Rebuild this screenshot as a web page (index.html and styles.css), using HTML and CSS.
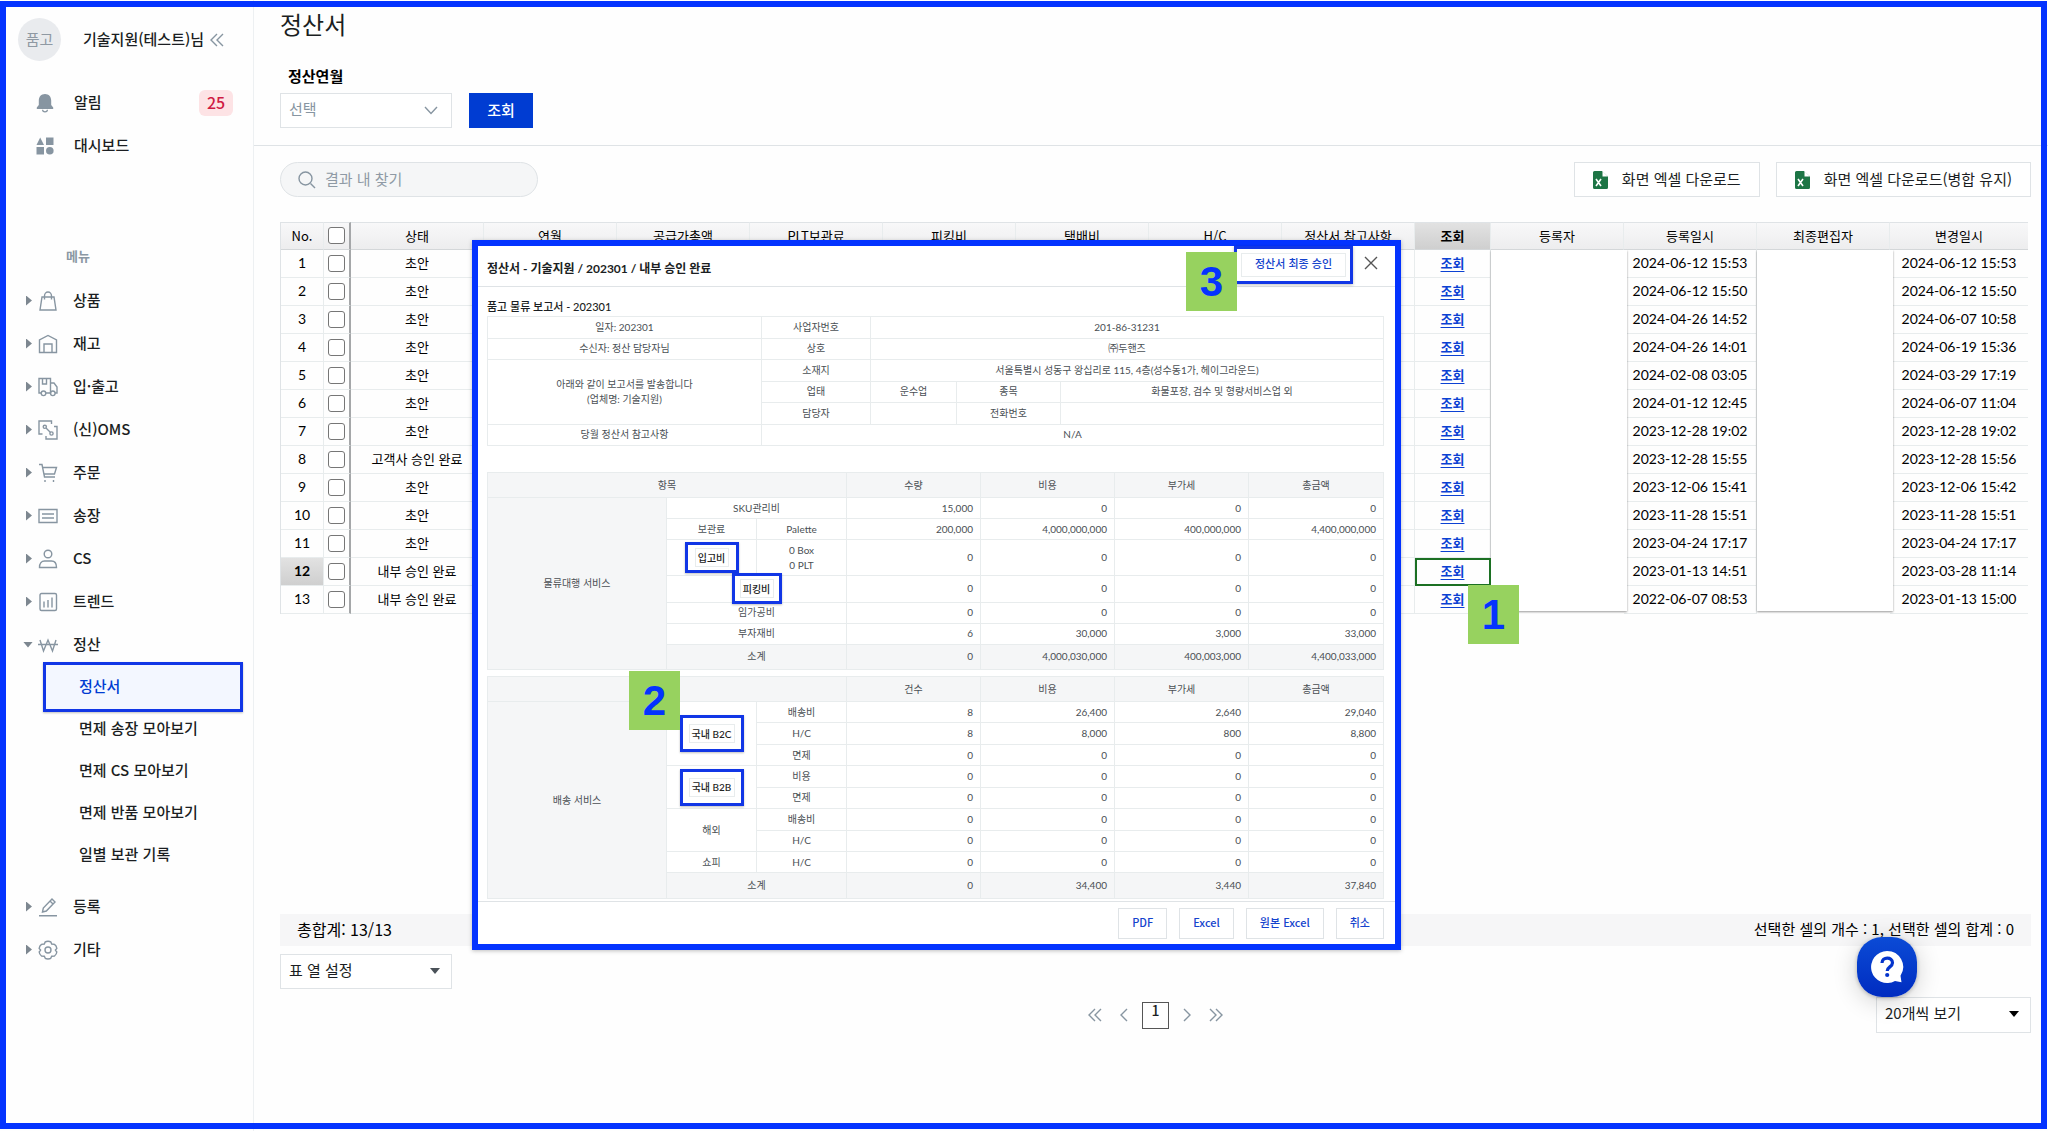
FILE: index.html
```html
<!DOCTYPE html>
<html lang="ko">
<head>
<meta charset="utf-8">
<title>정산서</title>
<meta name="viewport" content="width=device-width, initial-scale=1">
<link rel="stylesheet" href="styles.css">
</head>
<body>
<div class="app">
  <aside class="sidebar">
    <div class="profile">
      <span class="avatar">품고</span>
      <span class="profile-name">기술지원(테스트)님</span>
      <button class="icon-button" type="button" aria-label="메뉴 접기"><svg width="14" height="14" viewBox="0 0 14 14" class="line"><path d="M7 1L1 7l6 6M13 1L7 7l6 6"/></svg></button>
    </div>
    <nav class="nav" aria-label="바로가기">
      <a class="shortcut" href="#"><svg width="18" height="20" viewBox="0 0 18 20" class="fill"><path d="M9 1c-3.800 0-6.200 2.800-6.200 6.500V12L.8 14.600V16h16.400v-1.400L15.200 12V7.500C15.200 3.800 12.800 1 9 1zM6 16.800a3 2.600 0 0 0 6 0l-1.200 0a1.800 1.400 0 0 1-3.600 0z"/></svg>알림<span class="badge">25</span></a>
      <a class="shortcut" href="#"><svg width="18" height="20" viewBox="0 0 18 20" class="fill"><path d="M4.200 1.500L8 9H.5zM10 1.500h7.500V9H10zM.5 11H8v7.500H.5z"/><circle cx="13.800" cy="14.800" r="3.800"/></svg>대시보드</a>
    </nav>
    <p class="nav-title">메뉴</p>
    <nav class="nav" aria-label="메뉴">
      <a class="menu" href="#"><i class="arrow"></i><svg width="20" height="20" viewBox="0 0 20 20" class="line"><path d="M4 6h12l2 13H2zM6.500 8.500V5a3.500 4 0 0 1 7 0v3.500" /></svg>상품</a>
      <a class="menu" href="#"><i class="arrow"></i><svg width="20" height="20" viewBox="0 0 20 20" class="line"><path d="M1.500 18.500V6L10 1.500 18.500 6v12.500zM6 18.500V10h8v8.500"/></svg>재고</a>
      <a class="menu" href="#"><i class="arrow"></i><svg width="20" height="20" viewBox="0 0 20 20" class="line"><path d="M3 16H1V1.500h11.500V16H8M12.500 6h3.500l3 4v6h-2M4.500 1.500V7h4V1.500"/><circle cx="5.500" cy="16.300" r="2.300"/><circle cx="14.800" cy="16.300" r="2.300"/></svg>입·출고</a>
      <a class="menu" href="#"><i class="arrow"></i><svg width="20" height="20" viewBox="0 0 20 20" class="line"><path d="M4.500 14H1V1h12.500v3M8 16v3h11V6.500h-3M8 8l4.500 4.500"/><circle cx="6.800" cy="6.800" r="1.600"/><circle cx="13.500" cy="13.500" r="1.600"/></svg>(신)OMS</a>
      <a class="menu" href="#"><i class="arrow"></i><svg width="20" height="20" viewBox="0 0 20 20" class="line"><path d="M1 1.500h3L6.500 14H17M4.800 4.500H18.500L16.500 11H6.200M7 17v2M15.500 17v2"/></svg>주문</a>
      <a class="menu" href="#"><i class="arrow"></i><svg width="20" height="20" viewBox="0 0 20 20" class="line"><path d="M1 3.500h18v13H1zM4 8h12M4 12h12"/></svg>송장</a>
      <a class="menu" href="#"><i class="arrow"></i><svg width="20" height="20" viewBox="0 0 20 20" class="line"><circle cx="10" cy="5" r="3.800"/><path d="M1.500 18.500c0-4 2-6.500 5-6.500h7c3 0 5 2.500 5 6.500z"/></svg>CS</a>
      <a class="menu" href="#"><i class="arrow"></i><svg width="20" height="20" viewBox="0 0 20 20" class="line"><rect x="2" y="1.500" width="16.500" height="17" rx="1.500"/><path d="M6 9.500v6M10 8v7.500M14 5.500v10"/></svg>트렌드</a>
      <a class="menu" href="#" aria-expanded="true"><i class="arrow open"></i><svg width="20" height="20" viewBox="0 0 20 20" class="line"><path d="M2 5l3.500 11L10 5l4.500 11L18 5M0 9.500h20"/></svg>정산</a>
      <div class="submenu">
        <a class="sub current" href="#" aria-current="page">정산서</a>
        <a class="sub" href="#">면제 송장 모아보기</a>
        <a class="sub" href="#">면제 CS 모아보기</a>
        <a class="sub" href="#">면제 반품 모아보기</a>
        <a class="sub" href="#">일별 보관 기록</a>
      </div>
      <a class="menu" href="#"><i class="arrow"></i><svg width="20" height="20" viewBox="0 0 20 20" class="line"><path d="M1 18.800h18M4.500 15l.8-4L14 2l3 3-8.700 9zM12 4l3 3"/></svg>등록</a>
      <a class="menu" href="#"><i class="arrow"></i><svg width="20" height="20" viewBox="0 0 20 20" class="line"><path d="M7.300 1.800C8.500 1 11.500 1 12.700 1.800l1 2.200 2.800.4c1.300.9 2.200 2.600 2.300 4L17.400 10l1.400 2c-.1 1.500-1 3-2.300 4l-2.800.2-1 2.200c-1.200.8-4.200.8-5.400 0l-1-2.200L3.500 16c-1.300-1-2.200-2.500-2.300-4l1.400-2-1.400-1.600c.1-1.400 1-3.100 2.300-4L6.300 4z"/><circle cx="10" cy="10" r="3"/></svg>기타</a>
    </nav>
  </aside>

  <main class="main">
    <header class="page-head">
      <h1>정산서</h1>
      <label class="filter-label" for="month">정산연월</label>
      <div class="filters">
        <span class="select-box"><select id="month" class="placeholder"><option>선택</option></select><svg width="14" height="9" viewBox="0 0 14 9" class="line"><path d="M1 1l6 6.500L13 1"/></svg></span>
        <button class="primary" type="button">조회</button>
      </div>
    </header>

    <section class="content">
      <div class="toolbar">
        <label class="search"><svg width="18" height="18" viewBox="0 0 18 18" class="line"><circle cx="7.500" cy="7.500" r="6.500"/><path d="M12.500 12.500L17 17"/></svg><input type="search" placeholder="결과 내 찾기" aria-label="결과 내 찾기"></label>
        <div class="exports">
          <button class="export" type="button"><svg width="15" height="18" viewBox="0 0 15 18"><path d="M1.500 0H9l6 5.500V16.500A1.500 1.500 0 0 1 13.500 18h-12A1.500 1.500 0 0 1 0 16.500v-15A1.500 1.500 0 0 1 1.500 0z" fill="#1d7545"/><path d="M9.500 0v5.500H15z" fill="#fff"/><path d="M3 8l5 7M8 8l-5 7" stroke="#fff" stroke-width="1.600" fill="none"/></svg>화면 엑셀 다운로드</button>
          <button class="export" type="button"><svg width="15" height="18" viewBox="0 0 15 18"><path d="M1.500 0H9l6 5.500V16.500A1.500 1.500 0 0 1 13.500 18h-12A1.500 1.500 0 0 1 0 16.500v-15A1.500 1.500 0 0 1 1.500 0z" fill="#1d7545"/><path d="M9.500 0v5.500H15z" fill="#fff"/><path d="M3 8l5 7M8 8l-5 7" stroke="#fff" stroke-width="1.600" fill="none"/></svg>화면 엑셀 다운로드(병합 유지)</button>
        </div>
      </div>

      <div class="grid-area">
        <table class="grid">
          <colgroup><col class="c-no"><col class="c-check"><col class="c-mid"><col class="c-mid"><col class="c-mid"><col class="c-mid"><col class="c-mid"><col class="c-mid"><col class="c-mid"><col class="c-mid"><col class="c-link"><col class="c-mid"><col class="c-mid"><col class="c-mid"><col></colgroup>
          <thead>
            <tr><th>No.</th><th class="pin"><input type="checkbox" aria-label="전체 선택"></th><th>상태</th><th>연월</th><th>공급가총액</th><th>PLT보관료</th><th>피킹비</th><th>택배비</th><th>H/C</th><th>정산서 참고사항</th><th class="active">조회</th><th>등록자</th><th>등록일시</th><th>최종편집자</th><th>변경일시</th></tr>
          </thead>
          <tbody>
            <tr><td class="num">1</td><td class="pin"><input type="checkbox" aria-label="1행"></td><td>초안</td><td></td><td></td><td></td><td></td><td></td><td></td><td></td><td><a href="#">조회</a></td><td class="masked" rowspan="13"><div class="mask"></div></td><td class="num">2024-06-12 15:53</td><td class="masked" rowspan="13"><div class="mask"></div></td><td class="num">2024-06-12 15:53</td></tr>
            <tr><td class="num">2</td><td class="pin"><input type="checkbox" aria-label="2행"></td><td>초안</td><td></td><td></td><td></td><td></td><td></td><td></td><td></td><td><a href="#">조회</a></td><td class="num">2024-06-12 15:50</td><td class="num">2024-06-12 15:50</td></tr>
            <tr><td class="num">3</td><td class="pin"><input type="checkbox" aria-label="3행"></td><td>초안</td><td></td><td></td><td></td><td></td><td></td><td></td><td></td><td><a href="#">조회</a></td><td class="num">2024-04-26 14:52</td><td class="num">2024-06-07 10:58</td></tr>
            <tr><td class="num">4</td><td class="pin"><input type="checkbox" aria-label="4행"></td><td>초안</td><td></td><td></td><td></td><td></td><td></td><td></td><td></td><td><a href="#">조회</a></td><td class="num">2024-04-26 14:01</td><td class="num">2024-06-19 15:36</td></tr>
            <tr><td class="num">5</td><td class="pin"><input type="checkbox" aria-label="5행"></td><td>초안</td><td></td><td></td><td></td><td></td><td></td><td></td><td></td><td><a href="#">조회</a></td><td class="num">2024-02-08 03:05</td><td class="num">2024-03-29 17:19</td></tr>
            <tr><td class="num">6</td><td class="pin"><input type="checkbox" aria-label="6행"></td><td>초안</td><td></td><td></td><td></td><td></td><td></td><td></td><td></td><td><a href="#">조회</a></td><td class="num">2024-01-12 12:45</td><td class="num">2024-06-07 11:04</td></tr>
            <tr><td class="num">7</td><td class="pin"><input type="checkbox" aria-label="7행"></td><td>초안</td><td></td><td></td><td></td><td></td><td></td><td></td><td></td><td><a href="#">조회</a></td><td class="num">2023-12-28 19:02</td><td class="num">2023-12-28 19:02</td></tr>
            <tr><td class="num">8</td><td class="pin"><input type="checkbox" aria-label="8행"></td><td>고객사 승인 완료</td><td></td><td></td><td></td><td></td><td></td><td></td><td></td><td><a href="#">조회</a></td><td class="num">2023-12-28 15:55</td><td class="num">2023-12-28 15:56</td></tr>
            <tr><td class="num">9</td><td class="pin"><input type="checkbox" aria-label="9행"></td><td>초안</td><td></td><td></td><td></td><td></td><td></td><td></td><td></td><td><a href="#">조회</a></td><td class="num">2023-12-06 15:41</td><td class="num">2023-12-06 15:42</td></tr>
            <tr><td class="num">10</td><td class="pin"><input type="checkbox" aria-label="10행"></td><td>초안</td><td></td><td></td><td></td><td></td><td></td><td></td><td></td><td><a href="#">조회</a></td><td class="num">2023-11-28 15:51</td><td class="num">2023-11-28 15:51</td></tr>
            <tr><td class="num">11</td><td class="pin"><input type="checkbox" aria-label="11행"></td><td>초안</td><td></td><td></td><td></td><td></td><td></td><td></td><td></td><td><a href="#">조회</a></td><td class="num">2023-04-24 17:17</td><td class="num">2023-04-24 17:17</td></tr>
            <tr><td class="num active">12</td><td class="pin"><input type="checkbox" aria-label="12행"></td><td>내부 승인 완료</td><td></td><td></td><td></td><td></td><td></td><td></td><td></td><td class="selected"><a href="#">조회</a><span class="step step-1">1</span></td><td class="num">2023-01-13 14:51</td><td class="num">2023-03-28 11:14</td></tr>
            <tr><td class="num">13</td><td class="pin"><input type="checkbox" aria-label="13행"></td><td>내부 승인 완료</td><td></td><td></td><td></td><td></td><td></td><td></td><td></td><td><a href="#">조회</a></td><td class="num">2022-06-07 08:53</td><td class="num">2023-01-13 15:00</td></tr>
          </tbody>
        </table>
      </div>

      <div class="summary"><span class="total">총합계: 13/13</span><span>선택한 셀의 개수 : 1, 선택한 셀의 합계 : 0</span></div>
      <span class="select-box"><select aria-label="표 열 설정"><option>표 열 설정</option></select><i class="caret soft"></i></span>
      <div class="pager-row">
        <div class="pager">
          <button class="icon-button" type="button" aria-label="처음"><svg width="14" height="14" viewBox="0 0 14 14" class="line"><path d="M7 1L1 7l6 6M13 1L7 7l6 6"/></svg></button>
          <button class="icon-button" type="button" aria-label="이전"><svg width="14" height="14" viewBox="0 0 14 14" class="line"><path d="M10 1L4 7l6 6"/></svg></button>
          <button class="page-number" type="button">1</button>
          <button class="icon-button" type="button" aria-label="다음"><svg width="14" height="14" viewBox="0 0 14 14" class="line"><path d="M4 1l6 6-6 6"/></svg></button>
          <button class="icon-button" type="button" aria-label="마지막"><svg width="14" height="14" viewBox="0 0 14 14" class="line"><path d="M1 1l6 6-6 6M7 1l6 6-6 6"/></svg></button>
        </div>
        <span class="select-box page-size"><select aria-label="페이지 크기"><option>20개씩 보기</option></select><i class="caret"></i></span>
      </div>
    </section>

    <section class="modal" role="dialog" aria-label="정산서">
      <header class="modal-head">
        <h2>정산서 - 기술지원 / 202301 / 내부 승인 완료</h2>
        <button class="approve" type="button">정산서 최종 승인</button>
        <button class="icon-button" type="button" aria-label="닫기"><svg width="14" height="14" viewBox="0 0 14 14" class="line dark"><path d="M1 1l12 12M13 1L1 13"/></svg></button>
      </header>
      <div class="modal-body">
        <h3>품고 물류 보고서 - 202301</h3>
        <table class="report info">
          <colgroup><col class="i1"><col class="i2"><col class="i3"><col class="i4"><col></colgroup>
          <tr><td>일자: 202301</td><td>사업자번호</td><td colspan="3">201-86-31231</td></tr>
          <tr><td>수신자: 정산 담당자님</td><td>상호</td><td colspan="3">㈜두핸즈</td></tr>
          <tr><td rowspan="3">아래와 같이 보고서를 발송합니다<br>(업체명: 기술지원)</td><td>소재지</td><td colspan="3">서울특별시 성동구 왕십리로 115, 4층(성수동1가, 헤이그라운드)</td></tr>
          <tr><td>업태</td><td>운수업</td><td>종목</td><td>화물포장, 검수 및 형량서비스업 외</td></tr>
          <tr><td>담당자</td><td></td><td>전화번호</td><td></td></tr>
          <tr><td>당월 정산서 참고사항</td><td colspan="4">N/A</td></tr>
        </table>

        <table class="report logistics">
          <colgroup><col class="r1"><col class="r2"><col class="r2"><col class="r4"><col class="r4"><col class="r4"><col></colgroup>
          <thead><tr><th colspan="3">항목</th><th>수량</th><th>비용</th><th>부가세</th><th>총금액</th></tr></thead>
          <tbody>
            <tr><th rowspan="7">물류대행 서비스</th><td colspan="2">SKU관리비</td><td class="n">15,000</td><td class="n">0</td><td class="n">0</td><td class="n">0</td></tr>
            <tr><td>보관료</td><td>Palette</td><td class="n">200,000</td><td class="n">4,000,000,000</td><td class="n">400,000,000</td><td class="n">4,400,000,000</td></tr>
            <tr class="tall"><td><button class="item in" type="button">입고비</button></td><td>0 Box<br>0 PLT</td><td class="n">0</td><td class="n">0</td><td class="n">0</td><td class="n">0</td></tr>
            <tr class="pick"><td colspan="2"><button class="item out" type="button">피킹비</button></td><td class="n">0</td><td class="n">0</td><td class="n">0</td><td class="n">0</td></tr>
            <tr><td colspan="2">임가공비</td><td class="n">0</td><td class="n">0</td><td class="n">0</td><td class="n">0</td></tr>
            <tr><td colspan="2">부자재비</td><td class="n">6</td><td class="n">30,000</td><td class="n">3,000</td><td class="n">33,000</td></tr>
            <tr class="sum"><td colspan="2">소계</td><td class="n">0</td><td class="n">4,000,030,000</td><td class="n">400,003,000</td><td class="n">4,400,033,000</td></tr>
          </tbody>
        </table>

        <table class="report delivery">
          <colgroup><col class="r1"><col class="r2"><col class="r2"><col class="r4"><col class="r4"><col class="r4"><col></colgroup>
          <thead><tr><th colspan="3"></th><th>건수</th><th>비용</th><th>부가세</th><th>총금액</th></tr></thead>
          <tbody>
            <tr><th rowspan="9">배송 서비스</th><td rowspan="3"><button class="item b2c" type="button">국내 B2C</button></td><td>배송비</td><td class="n">8</td><td class="n">26,400</td><td class="n">2,640</td><td class="n">29,040</td></tr>
            <tr><td>H/C</td><td class="n">8</td><td class="n">8,000</td><td class="n">800</td><td class="n">8,800</td></tr>
            <tr><td>면제</td><td class="n">0</td><td class="n">0</td><td class="n">0</td><td class="n">0</td></tr>
            <tr><td rowspan="2"><button class="item b2b" type="button">국내 B2B</button></td><td>비용</td><td class="n">0</td><td class="n">0</td><td class="n">0</td><td class="n">0</td></tr>
            <tr><td>면제</td><td class="n">0</td><td class="n">0</td><td class="n">0</td><td class="n">0</td></tr>
            <tr><td rowspan="2">해외</td><td>배송비</td><td class="n">0</td><td class="n">0</td><td class="n">0</td><td class="n">0</td></tr>
            <tr><td>H/C</td><td class="n">0</td><td class="n">0</td><td class="n">0</td><td class="n">0</td></tr>
            <tr><td>쇼피</td><td>H/C</td><td class="n">0</td><td class="n">0</td><td class="n">0</td><td class="n">0</td></tr>
            <tr class="sum"><td colspan="2">소계</td><td class="n">0</td><td class="n">34,400</td><td class="n">3,440</td><td class="n">37,840</td></tr>
          </tbody>
        </table>
      </div>
      <footer class="modal-foot">
        <button type="button">PDF</button><button type="button">Excel</button><button type="button">원본 Excel</button><button type="button">취소</button>
      </footer>
      <span class="step step-2">2</span>
      <span class="step step-3">3</span>
    </section>
  </main>

  <button class="help" type="button" aria-label="도움말"><svg width="34" height="34" viewBox="0 0 34 34"><path d="M17 1a16 16 0 1 0 8 29.900l6.500 1.300-1-6.400A16 16 0 0 0 17 1z" fill="#fff"/><path d="M12 13c0-6.500 10.500-6.500 10.500-.3 0 4.300-5.300 4-5.300 8.300" fill="none" stroke="#0434cc" stroke-width="3.200"/><circle cx="17.200" cy="25" r="2.100" fill="#0434cc"/></svg></button>
</div>
<div class="frame"></div>
</body>
</html>
```
FILE: styles.css
```css
:root {
  --mark: #0433ff;
  --brand: #003cd2;
  --ink: #1b1e22;
  --muted: #8795a1;
  --line: #dfe3e6;
  --soft: #e8eced;
  --kr: "Noto Sans CJK KR", sans-serif;
  --mixed: Lato, "Noto Sans CJK KR", sans-serif;
}

* { box-sizing: border-box; }

body {
  margin: 0;
  background: #fefefe;
  color: var(--ink);
  font: 15px/20px var(--kr);
}

h1, h2, h3, p { margin: 0; }
a { color: inherit; text-decoration: none; }
button, select, input { font: inherit; color: inherit; margin: 0; }
button { background: none; border: 0; padding: 0; }
svg { flex: none; display: block; }
.line { fill: none; stroke: var(--muted); stroke-width: 1.4; }
.line.dark { stroke: #555; }
.fill { fill: var(--muted); }

.frame {
  position: fixed;
  inset: 1px 1px 2px 0;
  border: 6px solid var(--mark);
  pointer-events: none;
  z-index: 5;
}

.app { display: flex; min-height: 100vh; }

/* sidebar */
.sidebar {
  flex: none;
  width: 254px;
  padding-top: 18px;
  border-right: 1px solid #edf0f2;
  font-weight: 500;
}
.profile { display: flex; align-items: center; height: 43px; margin: 0 0 20px 18px; }
.avatar {
  width: 43px;
  height: 43px;
  margin-right: 22px;
  border-radius: 50%;
  background: #e9ebee;
  color: #8f99a3;
  line-height: 42px;
  text-align: center;
  font-weight: 400;
}
.profile-name { margin-right: 6px; padding-bottom: 2px; white-space: nowrap; }
.icon-button { display: flex; align-items: center; justify-content: center; }
.shortcut { display: flex; align-items: center; gap: 20px; height: 43px; padding: 0 20px 2px 36px; }
.shortcut svg { margin-top: 2px; }
.badge {
  width: 34px;
  height: 26px;
  margin: 2px 0 0 auto;
  border-radius: 6px;
  background: #fde3e5;
  color: #cf1a43;
  font: 500 16px/25px var(--kr);
  text-align: center;
}
.nav-title { margin: 79px 0 13px 66px; color: #8b98a4; font-size: 13px; font-weight: 700; }
.menu { display: flex; align-items: center; height: 43px; padding: 0 0 2px 26px; }
.menu svg { margin: 2px 15px 0 6px; }
.arrow { width: 6px; height: 10px; margin-top: 2px; background: #7d8790; clip-path: polygon(0 0, 100% 50%, 0 100%); }
.arrow.open { width: 10px; height: 6px; margin: 2px -1px 0 -3px; clip-path: polygon(0 0, 100% 0, 50% 100%); }
.submenu { padding-bottom: 9px; }
.sub { display: block; height: 42px; margin: 0 10px 0 43px; padding-left: 36px; line-height: 40px; }
.sub.current { position: relative; color: var(--brand); }
.sub.current::before {
  content: "";
  position: absolute;
  inset: -4px 0;
  border: 3px solid #1136e6;
  background: #f3f7ff;
  box-shadow: 0 1px 2px #00000040;
  z-index: -1;
}

/* main column */
.main { flex: 1; min-width: 0; display: flex; flex-direction: column; position: relative; }
.page-head { padding: 8px 26px 17px; border-bottom: 1px solid var(--line); }
h1 { font-size: 24px; line-height: 32px; font-weight: 400; }
.filter-label { display: block; margin: 26px 0 7px 8px; color: #000; font-weight: 700; }
.filters { display: flex; gap: 17px; }
.select-box { display: flex; position: relative; width: 172px; height: 35px; }
.select-box select {
  appearance: none;
  width: 100%;
  padding: 0 32px 4px 8px;
  border: 1px solid var(--line);
  border-radius: 0;
  background: #fff;
}
.select-box select.placeholder { color: var(--muted); }
.select-box svg { position: absolute; right: 14px; top: 13px; pointer-events: none; }
.caret {
  position: absolute;
  right: 12px;
  top: 14px;
  width: 10px;
  height: 6px;
  background: #000;
  clip-path: polygon(0 0, 100% 0, 50% 100%);
  pointer-events: none;
}
.caret.soft { background: #4a5259; }
.primary { width: 64px; padding-bottom: 2px; background: var(--brand); color: #fff; font-weight: 500; }

.content { flex: 1; display: flex; flex-direction: column; padding: 16px 17px 98px 26px; }
.toolbar { display: flex; justify-content: space-between; margin-bottom: 25px; }
.search {
  display: flex;
  align-items: center;
  gap: 9px;
  width: 258px;
  height: 35px;
  padding: 0 17px;
  border: 1px solid var(--line);
  border-radius: 18px;
  background: #f5f6f7;
}
.search input { flex: 1; min-width: 0; border: 0; padding: 0 0 2px; background: none; outline: 0; }
.search input::placeholder { color: #8f9aa5; }
.exports { display: flex; gap: 16px; }
.export {
  display: flex;
  align-items: center;
  gap: 14px;
  height: 35px;
  padding: 0 18px 2px;
  border: 1px solid var(--line);
  background: #fff;
}
.export svg { margin-top: 2px; }

.grid-area { flex: 1; padding-right: 3px; }
.grid {
  width: 100%;
  table-layout: fixed;
  border-collapse: separate;
  border-spacing: 0;
  border-left: 1px solid var(--line);
  color: #000;
  font-size: 13px;
}
.c-no { width: 43px; }
.c-check { width: 27px; }
.c-mid { width: 133px; }
.c-link { width: 76px; }
.grid th, .grid td {
  height: 28px;
  padding: 0 0 1px;
  border-right: 1px solid var(--soft);
  border-bottom: 1px solid var(--soft);
  text-align: center;
  font-weight: 400;
}
.grid th {
  border-top: 1px solid var(--line);
  border-bottom-color: #d4d7d9;
  background: linear-gradient(#f8f8f9, #ededee);
}
.grid .num { font: 14px/20px var(--mixed); }
.grid .pin { border-right: 2px solid #a5a7a9; }
.grid tr > :last-child { border-right: 0; }
.grid th.active, .grid td.active { background: linear-gradient(#e2e2e2, #cfcfcf); font-weight: 700; }
.grid a { color: #0b41d3; font-weight: 700; text-decoration: underline; text-underline-offset: 3px; }
.grid input {
  appearance: none;
  display: block;
  width: 17px;
  height: 17px;
  margin: 0 auto;
  border: 1px solid #767676;
  border-radius: 3px;
  background: #fff;
}
.grid .masked { position: relative; border-bottom: 0; border-right: 0; }
.mask {
  position: absolute;
  inset: 0 -3px 3px 0;
  background: #fff;
  box-shadow: 0 1px 2px #00000066;
  clip-path: inset(0 -2px -3px -2px);
}
.selected { position: relative; outline: 2px solid #1c7023; outline-offset: -2px; }

.summary {
  display: flex;
  justify-content: space-between;
  align-items: center;
  height: 32px;
  margin-bottom: 8px;
  padding: 0 17px 3px;
  background: #f6f6f7;
  color: #000;
}
.total { font-size: 16px; }
.pager-row { display: flex; justify-content: center; align-items: center; position: relative; height: 36px; margin-top: 8px; }
.pager { display: flex; align-items: center; gap: 15px; }
.page-number { width: 27px; height: 27px; margin: 0 -4px; padding-bottom: 10px; border: 1px solid #555; font: 500 14px/14px var(--kr); }
.page-size { position: absolute; right: 0; top: 0; width: 155px; height: 36px; }

/* step labels drawn over the screen */
.step {
  position: absolute;
  width: 51px;
  height: 59px;
  background: #97d25f;
  color: var(--mark);
  font: 700 42px/59px "Liberation Sans", sans-serif;
  text-align: center;
  z-index: 3;
}
.step-1 { left: 53px; top: 27px; }
.step-2 { left: 151px; top: 425px; }
.step-3 { right: 158px; top: 6px; }

/* report dialog */
.modal {
  position: absolute;
  left: 218px;
  top: 240px;
  width: 929px;
  border: 6px solid var(--mark);
  background: #fff;
  box-shadow: 0 1px 4px #00000040;
  z-index: 2;
}
.modal-head {
  display: flex;
  align-items: center;
  height: 41px;
  padding: 0 17px 0 9px;
  border-bottom: 1px solid var(--line);
}
.modal-head h2 { flex: 1; padding-top: 6px; font: 700 12px/20px var(--mixed); }
.modal-head .icon-button { margin: -6px 0 0 11px; }
.approve {
  align-self: flex-start;
  height: 38px;
  padding: 0 18px 5px;
  border: 3px solid #1136e6;
  box-shadow: inset 0 0 0 4px #fff, inset 0 0 0 5px var(--soft), 0 1px 3px #00000040;
  color: #1443cd;
  font-size: 11px;
  font-weight: 500;
}
.modal-body { padding: 9px 11px 2px 9px; }
.modal-body h3 { font: 500 11px/22px var(--mixed); height: 20px; }
.report {
  width: 100%;
  table-layout: fixed;
  border-collapse: collapse;
  color: #4a4f54;
  font: 10px/15px var(--mixed);
}
.report td, .report th { height: 21px; padding: 0; border: 1px solid var(--soft); text-align: center; font-weight: 400; }
.report th, .sum td { background: #f5f6f7; }
.report .n { padding-right: 7px; text-align: right; }
.info { height: 130px; margin-bottom: 26px; }
.logistics { height: 198px; margin-bottom: 6px; }
.delivery { height: 223px; }
.report thead th, .report .sum td { height: 25px; }
.report .tall td { height: 36px; }
.report .pick td { height: 26px; }
.i1 { width: 274px; }
.i2 { width: 109px; }
.i3 { width: 86px; }
.i4 { width: 104px; }
.r1 { width: 179px; }
.r2 { width: 90px; }
.r4 { width: 134px; }
.item { position: relative; display: block; width: 34px; height: 19px; margin: 0 auto; border: 1px solid var(--soft); color: #222; font-weight: 500; line-height: 16px; }
.item::after {
  content: "";
  position: absolute;
  inset: -7px -11px;
  border: 3px solid #1136e6;
  box-shadow: 0 1px 2px #00000040;
  z-index: 1;
}
.item.out::after { inset: -7px -9px; }
.item.b2c, .item.b2b { width: 46px; }
.item.b2c::after, .item.b2b::after { inset: -10px; }
.modal-foot {
  display: flex;
  justify-content: flex-end;
  gap: 12px;
  padding: 6px 11px 5px;
  border-top: 1px solid var(--line);
}
.modal-foot button {
  height: 31px;
  padding: 0 13px 3px;
  border: 1px solid var(--line);
  color: #1443cd;
  font-size: 11px;
  font-weight: 500;
}

.help {
  position: fixed;
  right: 131px;
  bottom: 134px;
  display: flex;
  align-items: center;
  justify-content: center;
  width: 60px;
  height: 60px;
  border-radius: 25px;
  background: linear-gradient(#0b4bd6, #002cc0);
  box-shadow: 0 4px 24px #00000030, 0 1px 4px #00000040;
  z-index: 4;
}
```
